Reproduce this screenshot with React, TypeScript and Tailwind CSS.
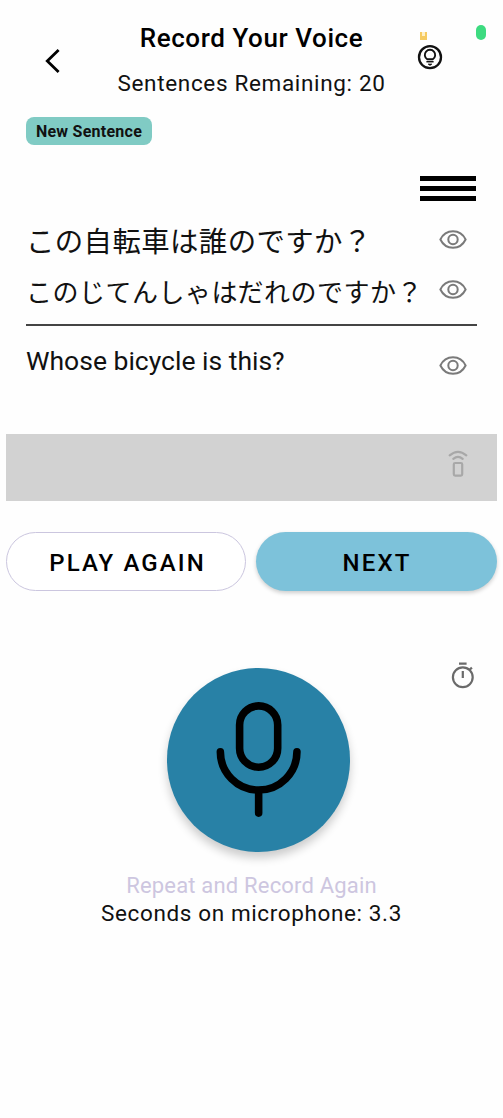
import React from "react";

function EyeIcon() {
  return (
    <svg width="28" height="20" viewBox="0 0 28 20" fill="none" stroke="#7a7a7a" strokeWidth="2">
      <path d="M1.400 9.500C4 4.100 8.500 1.300 14 1.300S24 4.100 26.600 9.500C24 14.900 19.500 17.700 14 17.700S4 14.900 1.400 9.500Z" />
      <circle cx="14" cy="9.500" r="4.700" />
    </svg>
  );
}

function BulbIcon() {
  return (
    <svg width="26" height="26" viewBox="0 0 26 26" fill="none" stroke="#111">
      <circle cx="13" cy="13.200" r="11" strokeWidth="2.300" />
      <path d="M10.200 15.300A5.200 5.200 0 1 1 15.800 15.300Z" strokeWidth="1.900" />
      <path d="M9.400 17.700h7.200" strokeWidth="1.500" />
      <path d="M11 20h4l-2 1.500z" fill="#111" strokeWidth="0.600" />
    </svg>
  );
}

function RemoteIcon() {
  return (
    <svg width="20" height="28" viewBox="0 0 20 28" fill="none" stroke="#a8a8a8" strokeWidth="2.200" strokeLinecap="round">
      <path d="M1.700 5.400Q10 -1.600 18.300 5.400" />
      <path d="M5.300 8.800Q10 4.900 14.700 8.800" />
      <rect x="5.800" y="13" width="8.400" height="12.600" rx="1.300" />
    </svg>
  );
}

function TimerIcon() {
  return (
    <svg width="24" height="28" viewBox="0 0 24 28" fill="none" stroke="#6a6a6a" strokeWidth="2.200">
      <circle cx="11.800" cy="16.300" r="9.900" />
      <path d="M8 2.600h7.600M11.800 10v7M18.600 8.800l2.300-2.200" />
    </svg>
  );
}

function MicIcon() {
  return (
    <svg className="size-full" viewBox="0 0 184 184" fill="none" stroke="#000" strokeWidth="7.600" strokeLinecap="round">
      <rect x="72.800" y="38" width="38.200" height="61.500" rx="19.100" />
      <path d="M53.500 84A38.400 38.400 0 0 0 130.300 84M91.900 123V145.500" />
    </svg>
  );
}

export default function App() {
  return (
    <main className="flex h-[1118px] w-[503px] flex-col overflow-hidden bg-[#fefefe] font-['Roboto',sans-serif] text-[#111]">
      <header className="relative grid h-[117px] shrink-0 grid-cols-[100px_1fr_100px]">
        <button aria-label="Back" className="flex h-[122px] items-center pl-[44px]">
          <svg width="18" height="26" viewBox="0 0 18 26" fill="none" stroke="#000" strokeWidth="2.800">
            <path d="M14.600 2L3.300 13L14.600 24" />
          </svg>
        </button>
        <div className="flex flex-col items-center pt-5 whitespace-nowrap">
          <h1 className="text-[26px] leading-[36px] font-medium tracking-[0.58px] text-black">Record Your Voice</h1>
          <p className="mt-[9px] text-[22.5px] leading-9 tracking-[0.66px]">Sentences Remaining: 20</p>
        </div>
        <div className="pt-11 pl-[14px]">
          <BulbIcon />
        </div>
        <span className="absolute top-8 left-[419.5px] flex h-2 w-[7.5px] justify-center bg-[#f6cb62]">
          <span className="h-1 w-[3px] bg-[#fff0c8]" />
        </span>
        <span className="absolute top-[25px] left-[475.5px] h-[15px] w-[10px] rounded-full bg-[#3ddb80]" />
      </header>

      <section className="flex flex-col pr-[26px] pl-[26px]">
        <span className="flex h-[27.500px] w-[126px] items-center justify-center rounded-[8px] bg-[#80cbc4] pt-[2px] text-[16px] font-bold tracking-[0.25px] whitespace-nowrap">
          New Sentence
        </span>
        <button aria-label="Menu" className="mt-[31.500px] mr-px flex h-[25px] w-[56px] flex-col justify-between self-end">
          <span className="h-[5px] w-full bg-black" />
          <span className="h-[5px] w-full bg-black" />
          <span className="h-[5px] w-full bg-black" />
        </button>
        <div className="mt-[14px] flex h-[50px] items-center justify-between pr-[10px] font-['Noto_Sans_CJK_JP',sans-serif]">
          <p className="text-[28.4px] leading-[50px] tracking-[0.42px] whitespace-nowrap">この自転車は誰のですか？</p>
          <EyeIcon />
        </div>
        <div className="flex h-[61px] justify-between border-b-2 border-[#444] pr-[10px] font-['Noto_Sans_CJK_JP',sans-serif]">
          <p className="w-[400px] text-[26px] leading-[51px] tracking-[0.5px] whitespace-nowrap">このじてんしゃはだれのですか？</p>
          <span className="pt-[15px]"><EyeIcon /></span>
        </div>
        <div className="flex h-[108px] justify-between pr-[10px]">
          <p className="text-[26.5px] leading-[70px]">Whose bicycle is this?</p>
          <span className="pt-[30px]"><EyeIcon /></span>
        </div>
      </section>

      <div className="mx-[6px] flex h-[66.500px] shrink-0 justify-end bg-[#d2d2d2] pt-4 pr-[29px]">
        <RemoteIcon />
      </div>

      <div className="mt-[31.500px] grid h-[59px] shrink-0 grid-cols-[240px_1fr] gap-[10px] px-[6px] text-[24px] font-medium tracking-[2.1px] text-black">
        <button className="rounded-full border border-[#cbc6df] bg-white pt-[2px] pl-[3px]">PLAY AGAIN</button>
        <button className="rounded-full bg-[#7dc2da] pt-[2px] pl-px shadow-[0_2px_4px_rgba(0,0,0,0.2)]">NEXT</button>
      </div>

      <div className="mt-[70px] grid h-[192px] shrink-0 grid-cols-[166.500px_183.500px_1fr]">
        <span />
        <button aria-label="Record" className="mt-[7px] size-[183.500px] rounded-full bg-[#2881a6] shadow-[0_6px_10px_rgba(0,0,0,0.2)]">
          <MicIcon />
        </button>
        <span className="pl-[100.500px]"><TimerIcon /></span>
      </div>

      <footer className="flex flex-col items-center pt-5 text-[22px] whitespace-nowrap">
        <p className="h-[25px] overflow-hidden leading-[26px] tracking-[0.18px] text-[#cdc6e0]">Repeat and Record Again</p>
        <p className="text-[22.5px] leading-[30px] tracking-[0.62px]">Seconds on microphone: 3.3</p>
      </footer>
    </main>
  );
}
